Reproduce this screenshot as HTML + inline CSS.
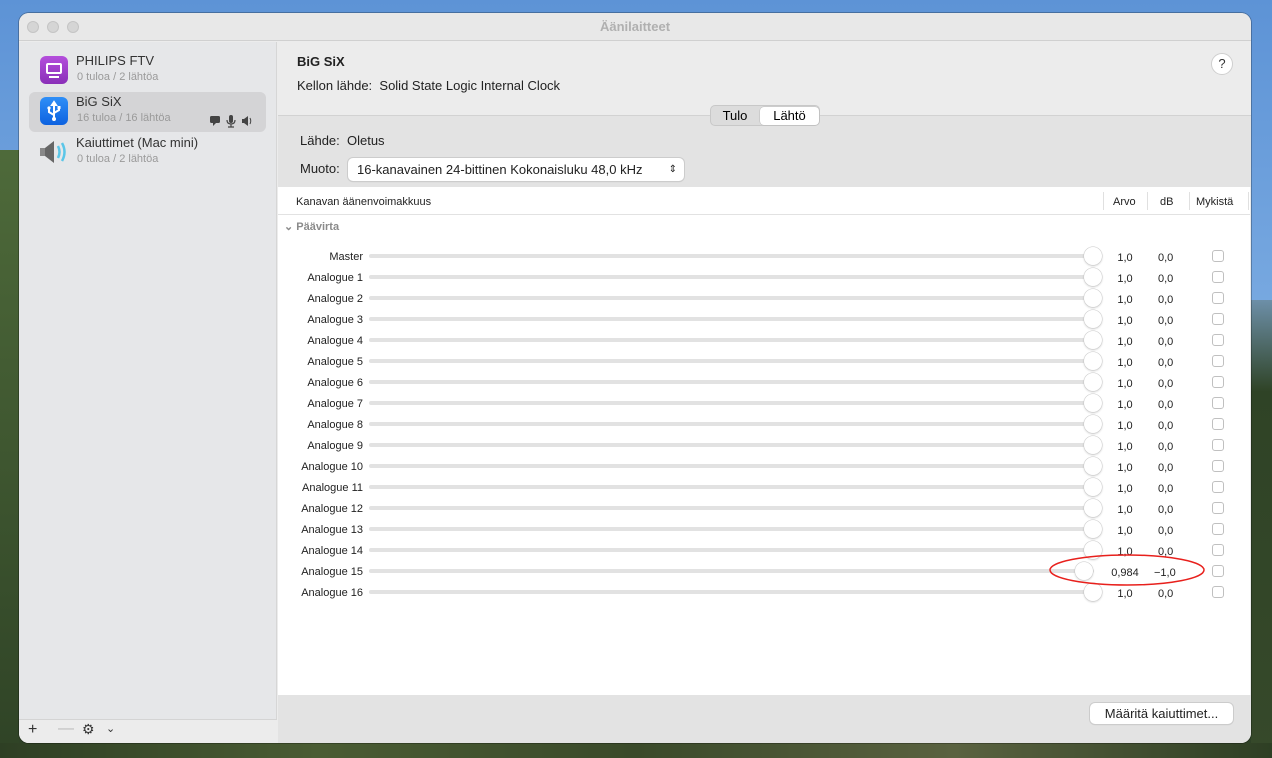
<!DOCTYPE html>
<html><head><meta charset="utf-8"><style>
*{box-sizing:border-box;margin:0;padding:0}
body{width:1272px;height:758px;overflow:hidden;position:relative;font-family:"Liberation Sans",sans-serif;
background:linear-gradient(180deg,#5d93d6 0%,#77a8e0 40%,#8ab4df 55%,#3c5a35 68%,#2e4026 100%);}
.bgl{position:absolute;left:0;top:150px;width:19px;height:608px;background:linear-gradient(180deg,#4e6a3a,#2f4326)}
.bgb{position:absolute;left:0;top:743px;width:1272px;height:15px;background:linear-gradient(90deg,#2e3f24,#4a5c33,#3a4a2a,#5a6240,#2e3f24)}
.bgr{position:absolute;left:1251px;top:300px;width:21px;height:458px;background:linear-gradient(180deg,#6d8fa8,#2f4326 20%,#36492a)}
.win{position:absolute;left:19px;top:13px;width:1232px;height:730px;border-radius:10px;overflow:hidden;background:#ececec;box-shadow:0 0 0 1px rgba(0,0,0,.25)}
.title{position:absolute;left:0;top:0;width:100%;height:28px;background:#e8e8e8;border-bottom:1px solid #d0d0d0;text-align:center;font-size:13px;color:#b0b0b0;line-height:28px;font-weight:bold}
.dot{position:absolute;top:8px;width:12px;height:12px;border-radius:50%;background:#d5d5d5;border:1px solid #c4c4c4}
.side{position:absolute;left:0;top:29px;width:258px;height:701px;background:#e6e7e9;border-right:1px solid #d6d6d6}
.item{position:absolute;left:10px;width:237px;height:40px}
.item .n{position:absolute;left:47px;top:2px;font-size:13px;color:#333}
.item .s{position:absolute;left:48px;top:20px;font-size:11px;color:#9a9a9a}
.ico{position:absolute;left:11px;top:5px;width:28px;height:28px;border-radius:6px}
.sbot{position:absolute;left:0;bottom:0;width:258px;height:24px;border-top:1px solid #d4d4d4;background:#ececec;font-size:16px;color:#333}
.main{position:absolute;left:259px;top:29px;width:973px;height:701px}
.h1{position:absolute;left:19px;top:12px;font-size:13px;font-weight:bold;color:#222}
.t{position:absolute;font-size:13px;color:#222}
.help{position:absolute;left:933px;top:11px;width:22px;height:22px;border-radius:50%;background:#fff;border:1px solid #cfcfcf;text-align:center;line-height:20px;font-size:13px;color:#333}
.gray{position:absolute;left:0;top:73px;width:973px;height:72px;background:#e3e3e3;border-top:1px solid #d2d2d2}
.seg{position:absolute;left:432px;top:63px;width:110px;height:21px;border-radius:5px;background:#dcdcdc;border:1px solid #c8c8c8;font-size:13px}
.seg span{position:absolute;top:1px;height:18px;line-height:18px;text-align:center}
.sel{position:absolute;left:70px;top:116px;width:336px;height:23px;background:#fff;border-radius:5px;box-shadow:0 0 0 1px #ccc,0 1px 1px rgba(0,0,0,.15);font-size:13px;line-height:23px;padding-left:9px;color:#222}
.table{position:absolute;left:0;top:145px;width:972px;height:508px;background:#fff}
.th{position:absolute;top:0;left:0;width:100%;height:28px;border-bottom:1px solid #e2e2e2;font-size:11px;color:#222}
.th span{position:absolute;top:9px}
.vs{position:absolute;top:5px;width:1px;height:18px;background:#e0e0e0}
.row{position:absolute;left:0;width:972px;height:21px;font-size:11px;color:#222}
.row .l{position:absolute;right:887px;top:5px;white-space:nowrap}
.tr{position:absolute;left:91px;top:8px;width:725px;height:4px;border-radius:2px;background:#e2e2e2}
.kn{position:absolute;top:1px;width:18px;height:18px;border-radius:50%;background:#fff;box-shadow:0 0 0 .5px #c8c8c8,0 1px 2px rgba(0,0,0,.2)}
.v{position:absolute;top:6px;text-align:center}
.cb{position:absolute;left:934px;top:4px;width:12px;height:12px;border:1px solid #c0c0c0;border-radius:3px;background:#fff}
.bbar{position:absolute;left:0;top:653px;width:973px;height:48px;background:#e3e3e3}
.btn{position:absolute;left:812px;top:661px;width:143px;height:21px;background:#fff;border-radius:5px;box-shadow:0 0 0 1px #ccc,0 1px 1px rgba(0,0,0,.15);font-size:13px;text-align:center;line-height:21px;color:#222}
</style></head><body>
<div class="bgl"></div><div class="bgr"></div><div class="bgb"></div>
<div class="win">
<div class="title">Äänilaitteet</div>
<div class="dot" style="left:8px"></div><div class="dot" style="left:28px"></div><div class="dot" style="left:48px"></div>
<div class="side">
 <div class="item" style="top:9px">
  <div class="ico" style="background:linear-gradient(#b44fdc,#8a2fb8)"><div style="position:absolute;left:6px;top:7px;width:16px;height:11px;border:2px solid #fff;border-radius:2px"></div><div style="position:absolute;left:9px;top:20px;width:10px;height:2px;background:#fff"></div></div>
  <div class="n">PHILIPS FTV</div><div class="s">0 tuloa / 2 lähtöa</div></div>
 <div class="item" style="top:50px;background:#d4d4d6;border-radius:6px;height:40px">
  <div class="ico" style="background:linear-gradient(#2f8ff7,#0d62e0)">
  <svg width="28" height="28" viewBox="0 0 28 28"><path d="M14 5v18M14 5l-2 3h4zM14 18l-5-3v-3M14 16l5-3v-2" stroke="#fff" stroke-width="2" fill="none"/><circle cx="14" cy="22" r="2" fill="#fff"/><circle cx="9" cy="11" r="1.6" fill="#fff"/><rect x="17.5" y="9" width="3" height="3" fill="#fff"/></svg></div>
  <div class="n">BiG SiX</div><div class="s">16 tuloa / 16 lähtöa</div>
  <svg style="position:absolute;left:181px;top:22px" width="46" height="14" viewBox="0 0 46 14"><rect x="0" y="2" width="10" height="7" rx="1.5" fill="#444"/><path d="M3 9l0 3 3-3z" fill="#444"/><rect x="19" y="1" width="4" height="8" rx="2" fill="#444"/><path d="M17 6q0 4 4 4t4-4M21 10v3M18 13h6" stroke="#444" stroke-width="1.2" fill="none"/><rect x="32" y="5" width="2" height="4" fill="#444"/><path d="M34 5l4-3v10l-4-3z" fill="#444"/><path d="M40 4q1.5 3 0 6" stroke="#444" fill="none"/></svg></div>
 <div class="item" style="top:91px">
  <div class="ico" style="background:none"><svg width="32" height="28" viewBox="0 0 32 28"><rect x="0" y="10" width="5" height="8" fill="#888"/><path d="M5 10l9-7v22l-9-7z" fill="#666"/><path d="M18 8q3 6 0 12M22 5q5 9 0 18" stroke="#5bc6e8" stroke-width="2.5" fill="none"/></svg></div>
  <div class="n">Kaiuttimet (Mac mini)</div><div class="s">0 tuloa / 2 lähtöa</div></div>
 <div class="sbot"><span style="position:absolute;left:9px;top:1px">+</span><span style="position:absolute;left:39px;top:0;color:#bbb">—</span><span style="position:absolute;left:63px;top:1px;font-size:14px">⚙</span><span style="position:absolute;left:87px;top:2px;font-size:11px">⌄</span></div>
</div>
<div class="main">
 <div class="h1">BiG SiX</div>
 <div class="t" style="left:19px;top:36px">Kellon lähde:&nbsp; Solid State Logic Internal Clock</div>
 <div class="help">?</div>
 <div class="gray"></div>
 <div class="seg"><span style="left:0;width:48px">Tulo</span><span style="left:49px;width:59px;background:#fff;border-radius:4px;box-shadow:0 0 0 .5px #bbb">Lähtö</span></div>
 <div class="t" style="left:22px;top:91px">Lähde:&nbsp; Oletus</div>
 <div class="t" style="left:22px;top:119px">Muoto:</div>
 <div class="sel">16-kanavainen 24-bittinen Kokonaisluku 48,0 kHz<span style="position:absolute;right:7px;top:0;font-size:10px">⇕</span></div>
 <div class="table">
  <div class="th"><span style="left:18px">Kanavan äänenvoimakkuus</span><span style="left:835px">Arvo</span><span style="left:882px">dB</span><span style="left:918px">Mykistä</span>
   <div class="vs" style="left:825px"></div><div class="vs" style="left:869px"></div><div class="vs" style="left:911px"></div><div class="vs" style="left:970px"></div></div>
  <div style="position:absolute;left:6px;top:33px;font-size:11px;color:#8a8a8a;font-weight:bold">⌄ Päävirta</div>
 </div>
 <div id="rows"></div>
 <svg style="position:absolute;left:770px;top:510px" width="160" height="36"><ellipse cx="79" cy="18" rx="77" ry="15" stroke="#e8201c" stroke-width="1.5" fill="none"/></svg>
 <div class="bbar"></div>
 <div class="btn">Määritä kaiuttimet...</div>
</div>
</div>
<script>
var names=["Master"];for(var i=1;i<=16;i++)names.push("Analogue "+i);
var h="";names.forEach(function(n,i){var y=204+i*21;var s=(i==15);
h+='<div class="row" style="top:'+y+'px"><span class="l">'+n+'</span><div class="tr"></div><div class="kn" style="left:'+(s?797:806)+'px"></div>'+
'<span class="v" style="left:'+(s?828:837)+'px;width:'+(s?38:20)+'px">'+(s?'0,984':'1,0')+'</span><span class="v" style="left:'+(s?876:880)+'px">'+(s?'−1,0':'0,0')+'</span><div class="cb"></div></div>';});
document.getElementById("rows").innerHTML=h;
</script>
</body></html>
